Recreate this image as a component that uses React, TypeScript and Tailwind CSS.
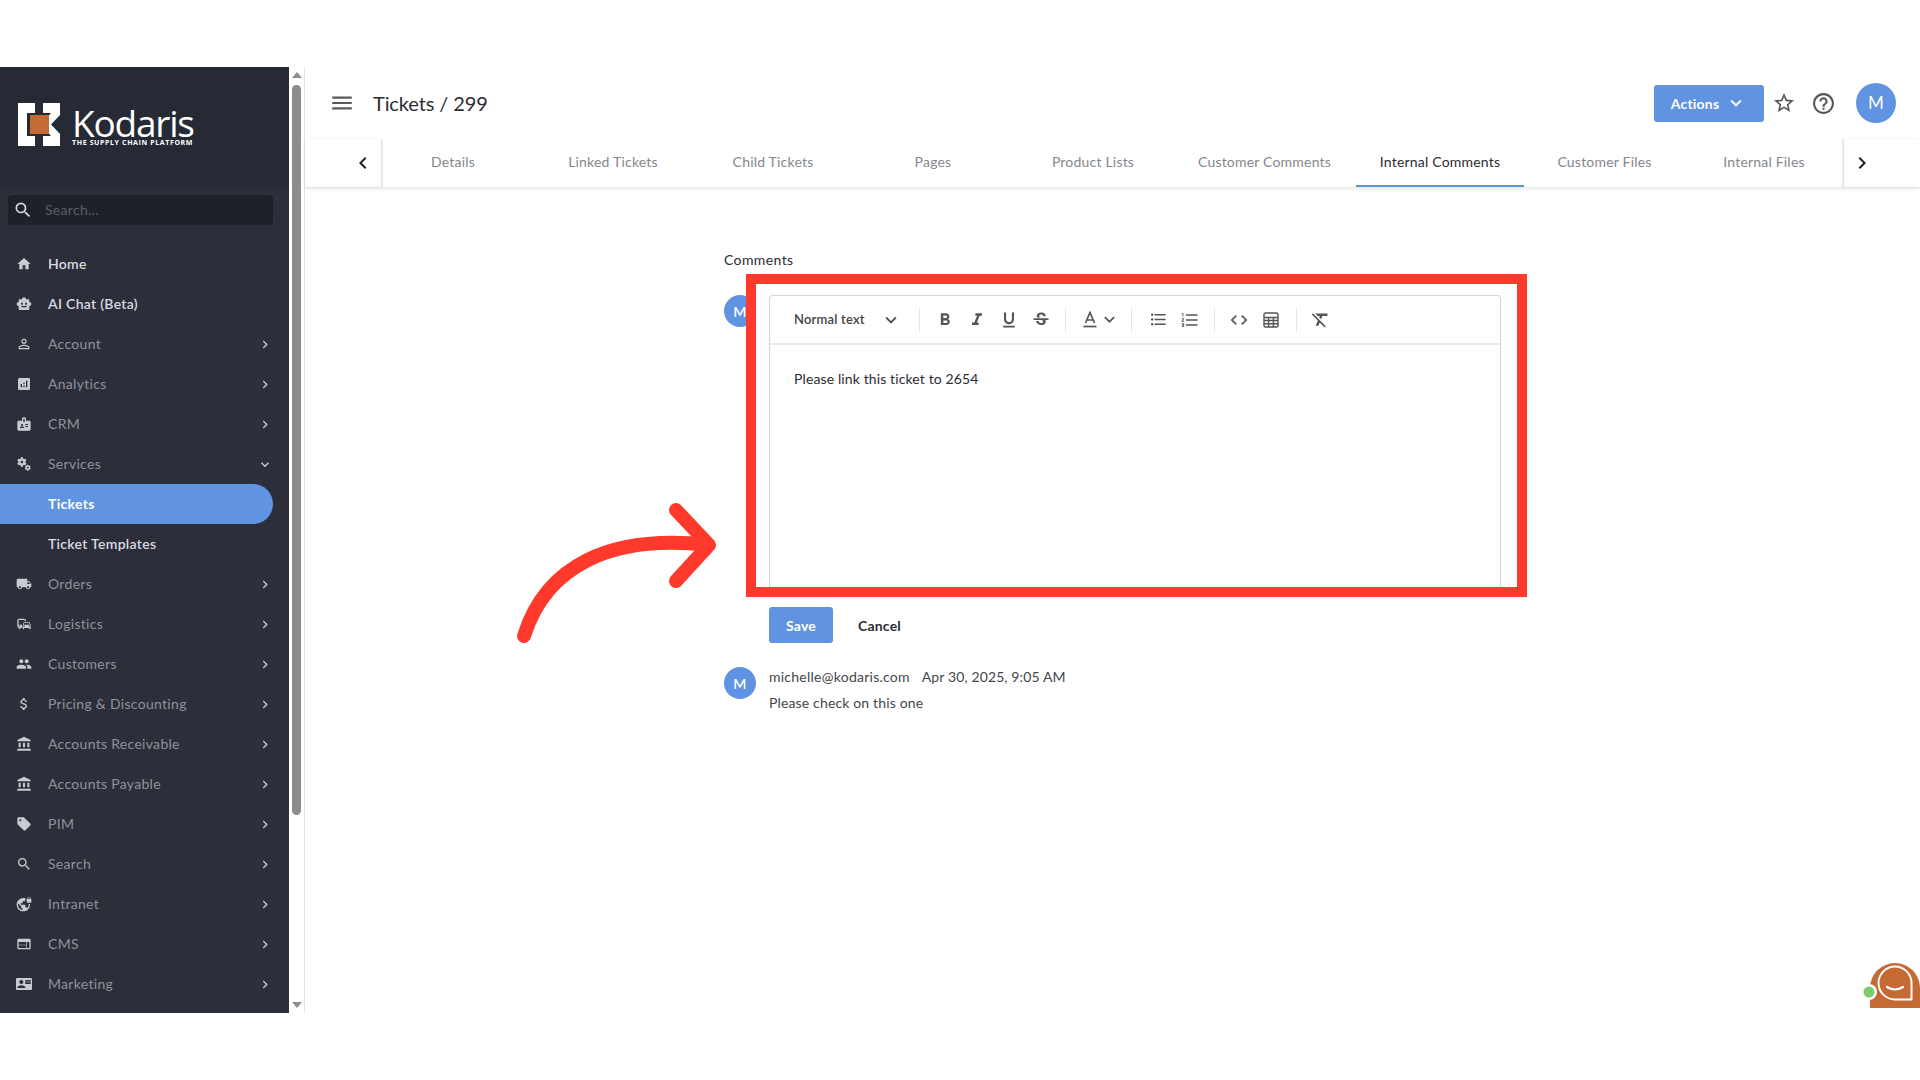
import type { ComponentType } from "react";
import {
  MdHome, MdSmartToy, MdPersonOutline, MdAnalytics, MdBadge, MdMiscellaneousServices, MdLocalShipping,
  MdCommute, MdPeople, MdAttachMoney, MdAccountBalance, MdSell, MdSearch, MdVpnLock, MdWeb, MdContactMail,
  MdChevronRight, MdChevronLeft, MdExpandMore, MdMenu, MdStarBorder, MdHelpOutline, MdFormatBold, MdFormatItalic,
  MdFormatUnderlined, MdStrikethroughS, MdFormatListBulleted, MdFormatListNumbered, MdCode, MdFormatClear,
} from "react-icons/md";

type Item = { label: string; icon?: ComponentType<{ size?: number; className?: string }>; bright?: boolean; active?: boolean; open?: boolean; noArrow?: boolean };

const menu: Item[] = [
  { label: "Home", icon: MdHome, bright: true, noArrow: true },
  { label: "AI Chat (Beta)", icon: MdSmartToy, bright: true, noArrow: true },
  { label: "Account", icon: MdPersonOutline },
  { label: "Analytics", icon: MdAnalytics },
  { label: "CRM", icon: MdBadge },
  { label: "Services", icon: MdMiscellaneousServices, open: true },
  { label: "Tickets", active: true, noArrow: true },
  { label: "Ticket Templates", bright: true, noArrow: true },
  { label: "Orders", icon: MdLocalShipping },
  { label: "Logistics", icon: MdCommute },
  { label: "Customers", icon: MdPeople },
  { label: "Pricing & Discounting", icon: MdAttachMoney },
  { label: "Accounts Receivable", icon: MdAccountBalance },
  { label: "Accounts Payable", icon: MdAccountBalance },
  { label: "PIM", icon: MdSell },
  { label: "Search", icon: MdSearch },
  { label: "Intranet", icon: MdVpnLock },
  { label: "CMS", icon: MdWeb },
  { label: "Marketing", icon: MdContactMail },
];

const tabs = [
  { label: "Details", w: "w-[160px]" },
  { label: "Linked Tickets", w: "w-[160px]" },
  { label: "Child Tickets", w: "w-[160px]" },
  { label: "Pages", w: "w-[160px]" },
  { label: "Product Lists", w: "w-[160px]" },
  { label: "Customer Comments", w: "w-[183px]" },
  { label: "Internal Comments", w: "w-[168px]", active: true },
  { label: "Customer Files", w: "w-[161px]" },
  { label: "Internal Files", w: "w-[158px]" },
];

function Logo() {
  return (
    <div className="flex items-start pl-[18px] pt-[36px] text-white">
      <svg width="42" height="43" viewBox="0 0 42 43">
        <path d="M0 0H17V10H9V33H17V43H0Z" fill="#fff" />
        <path d="M25 0H42V12L33 21.5L42 31V43H25V33L33 33L27 26V17L33 10H25Z" fill="#fff" />
        <rect x="12" y="12" width="19" height="19" fill="#c46a35" />
      </svg>
      <div className="ml-[12px] flex flex-col font-['Open_Sans',sans-serif] tracking-normal">
        <span className="mt-[4px] text-[37px] leading-[32px] tracking-[-1.2px]">Kodaris</span>
        <span className="whitespace-nowrap text-[7px] font-bold leading-[7px] tracking-[0.62px]">THE SUPPLY CHAIN PLATFORM</span>
      </div>
    </div>
  );
}

function SideRow({ item }: { item: Item }) {
  const Icon = item.icon;
  return (
    <div className={`flex h-10 items-center ${item.active ? "mr-4 rounded-r-full bg-[#6093e1] font-bold text-white" : item.bright ? "font-semibold text-[#d9dbe0]" : "text-[#8f929b]"}`}>
      <div className="flex w-12 shrink-0 justify-center">
        {Icon && <Icon size={16} className="text-[#c9cbd0]" />}
      </div>
      <span className="flex-1 whitespace-nowrap pb-[2px]">{item.label}</span>
      {!item.noArrow && (
        <div className="mr-4 flex w-4 justify-center text-[#c9cbd0]">
          {item.open ? <MdExpandMore size={17} /> : <MdChevronRight size={17} />}
        </div>
      )}
    </div>
  );
}

function Sidebar() {
  return (
    <aside className="flex h-full w-[289px] shrink-0 flex-col bg-[#2c2e39] text-[14px] tracking-[0.3px]">
      <div className="h-[120px] bg-[#262a35]">
        <Logo />
      </div>
      <div className="px-2 pt-2 pb-[19px]">
        <div className="flex h-[30px] w-[265px] items-center rounded bg-[#1f2129]">
          <MdSearch size={20} className="ml-[5px] text-[#d5d7db]" />
          <span className="ml-[12px] pb-[2px] text-[#5b5e67]">Search...</span>
        </div>
      </div>
      {menu.map((item) => (
        <SideRow key={item.label} item={item} />
      ))}
    </aside>
  );
}

function SideScrollbar() {
  return (
    <div className="flex h-full w-4 shrink-0 flex-col items-center border-r border-[#e4e4e4] bg-white">
      <div className="mt-[5px] h-0 w-0 border-x-[5px] border-b-[6px] border-x-transparent border-b-[#8c8c8c]" />
      <div className="mt-[7px] h-[730px] w-[9px] rounded-[5px] bg-[#8c8c8c]" />
      <div className="flex-1" />
      <div className="mb-[5px] h-0 w-0 border-x-[5px] border-t-[6px] border-x-transparent border-t-[#8c8c8c]" />
    </div>
  );
}

function TopBar() {
  return (
    <div className="flex h-[72px] shrink-0 items-center pl-[24px] pr-[24px]">
      <MdMenu size={26} className="text-[#5a5a5a]" />
      <h1 className="ml-[18px] pb-[1px] text-[20px] tracking-[-0.1px] text-[#2b2d33]">Tickets / 299</h1>
      <div className="flex-1" />
      <button className="flex h-[37px] w-[110px] items-center justify-center gap-[6px] rounded-[3px] bg-[#6093e1] text-[14px] font-bold text-white">
        Actions
        <MdExpandMore size={22} />
      </button>
      <MdStarBorder size={24} className="ml-[8px] text-[#555]" />
      <MdHelpOutline size={25} className="ml-[15px] text-[#555]" />
      <div className="ml-[20px] flex h-10 w-10 items-center justify-center rounded-full bg-[#6093e1] text-[17px] text-white">M</div>
    </div>
  );
}

function TabBar() {
  return (
    <div className="flex h-[48px] shrink-0 shadow-[0_2px_3px_rgba(0,0,0,0.1)]">
      <div className="relative z-10 -mr-[9px] flex w-[77px] shrink-0 items-center justify-end border-r border-[#e0e0e0] pr-[6px] text-[#222] shadow-[1px_0_2px_rgba(0,0,0,0.08)]">
        <MdChevronLeft size={24} />
      </div>
      {tabs.map((t) => (
        <div key={t.label} className={`flex ${t.w} shrink-0 items-center justify-center whitespace-nowrap border-b-2 pb-[2px] text-[14px] ${t.active ? "border-[#6093e1] text-[#2b2d33]" : "border-transparent text-[#85878c]"}`}>
          {t.label}
        </div>
      ))}
      <div className="flex w-[77px] shrink-0 items-center border-l border-[#e0e0e0] pl-[6px] text-[#222] shadow-[-1px_0_2px_rgba(0,0,0,0.08)]">
        <MdChevronRight size={24} />
      </div>
    </div>
  );
}

function Sep() {
  return <div className="h-6 w-px shrink-0 bg-[#e6e6ea]" />;
}

function Toolbar() {
  const btn = "flex w-8 shrink-0 items-center justify-center";
  return (
    <div className="flex h-[49px] items-center border-b-2 border-[#e8e8ee] pl-6 text-[#555]">
      <span className="w-[86px] text-[13px] font-semibold text-[#444]">Normal text</span>
      <MdExpandMore size={22} className="mr-[17px] text-[#555]" />
      <Sep />
      <div className="ml-[9px] flex">
        <div className={btn}><MdFormatBold size={20} /></div>
        <div className={btn}><MdFormatItalic size={20} /></div>
        <div className={btn}><MdFormatUnderlined size={20} /></div>
        <div className={btn}><MdStrikethroughS size={20} /></div>
      </div>
      <div className="ml-[8px]"><Sep /></div>
      <div className="ml-[16px] flex w-[42px] items-center">
        <svg width="16" height="18" viewBox="0 0 16 18" className="shrink-0">
          <path d="M3.5 12 8 1.5 12.5 12M5 9h6" fill="none" stroke="#555" strokeWidth="1.7" />
          <path d="M1.5 15.5h13" stroke="#555" strokeWidth="1.7" />
        </svg>
        <MdExpandMore size={21} className="ml-[1px]" />
      </div>
      <div className="ml-[7px]"><Sep /></div>
      <div className="ml-[10px] flex">
        <div className={btn}><MdFormatListBulleted size={19} /></div>
        <div className={btn}><MdFormatListNumbered size={20} /></div>
      </div>
      <div className="ml-[8px]"><Sep /></div>
      <div className="ml-[8px] flex">
        <div className={btn}><MdCode size={20} /></div>
        <div className={btn}>
          <svg width="16" height="16" viewBox="0 0 16 16" fill="none" stroke="#555" strokeWidth="1.4">
            <rect x="1" y="1" width="14" height="14" rx="1.5" />
            <path d="M1 5.5h14M1 8.5h14M1 11.7h14M5.6 5.5V15M10.4 5.5V15" />
          </svg>
        </div>
      </div>
      <div className="ml-[9px]"><Sep /></div>
      <div className="ml-[7px] flex w-8 justify-center"><MdFormatClear size={21} /></div>
    </div>
  );
}

function CommentsPanel() {
  return (
    <div className="ml-[419px] w-[777px] pt-[63px] text-[14px] text-[#2b2d33]">
      <div className="h-5 leading-5 tracking-[0.4px]">Comments</div>
      <div className="mt-[25px] flex gap-[13px]">
        <div className="flex h-8 w-8 shrink-0 items-center justify-center rounded-full bg-[#6093e1] font-semibold text-white">M</div>
        <div className="flex-1">
          <div className="h-[302px] rounded-t-[4px] border border-[#d4d4dc] border-b-0">
            <Toolbar />
            <p className="px-6 pt-[24px] leading-5 tracking-[0.12px]">Please link this ticket to 2654</p>
          </div>
          <div className="mt-[10px] flex items-center">
            <button className="h-9 w-16 rounded-[3px] bg-[#6093e1] font-bold text-white">Save</button>
            <button className="ml-[25px] font-bold text-[#2b2d33]">Cancel</button>
          </div>
        </div>
      </div>
      <div className="mt-[24px] flex gap-[13px]">
        <div className="flex h-8 w-8 shrink-0 items-center justify-center rounded-full bg-[#6093e1] font-semibold text-white">M</div>
        <div>
          <div className="flex gap-3 leading-5 text-[#44464c]">
            <span className="tracking-[0.25px]">michelle@kodaris.com</span>
            <span className="tracking-[0.12px]">Apr 30, 2025, 9:05 AM</span>
          </div>
          <p className="mt-[6px] leading-5 tracking-[0.15px] text-[#44464c]">Please check on this one</p>
        </div>
      </div>
    </div>
  );
}

function Annotations() {
  return (
    <>
      <div className="absolute left-[746px] top-[274px] h-[323px] w-[781px] border-[10px] border-[#ff3a2d]" />
      <svg className="absolute left-[510px] top-[495px]" width="220" height="155" viewBox="510 495 220 155" fill="none" stroke="#ff3a2d" strokeWidth="14" strokeLinecap="round" strokeLinejoin="round">
        <path d="M524 636C546 566 610 534 708 545" />
        <path d="M676 510 709 545 676 581" />
      </svg>
    </>
  );
}

function ChatWidget() {
  return (
    <svg className="absolute left-[1862px] top-[960px]" width="58" height="50" viewBox="0 0 58 50">
      <path d="M8 48V28A25 25 0 0 1 58 28V48Z" fill="#c46a35" />
      <path d="M33 6.5A16.5 16.5 0 0 1 49.5 23V39.5H33A16.5 16.5 0 0 1 33 6.5Z" fill="#c46a35" stroke="#fff" strokeWidth="2" strokeLinejoin="round" />
      <path d="M25 27Q33 32 41 27" fill="none" stroke="#fff" strokeWidth="2.2" strokeLinecap="round" />
      <circle cx="7" cy="32" r="8" fill="#fff" />
      <circle cx="7" cy="32" r="5.5" fill="#7ccb6c" />
    </svg>
  );
}

export default function App() {
  return (
    <div className="relative h-screen w-full overflow-hidden bg-white font-['Lato',sans-serif] tracking-[0.2px]">
      <div className="h-[67px]" />
      <div className="flex h-[946px]">
        <Sidebar />
        <SideScrollbar />
        <main className="flex min-w-0 flex-1 flex-col">
          <TopBar />
          <TabBar />
          <CommentsPanel />
        </main>
      </div>
      <Annotations />
      <ChatWidget />
    </div>
  );
}
